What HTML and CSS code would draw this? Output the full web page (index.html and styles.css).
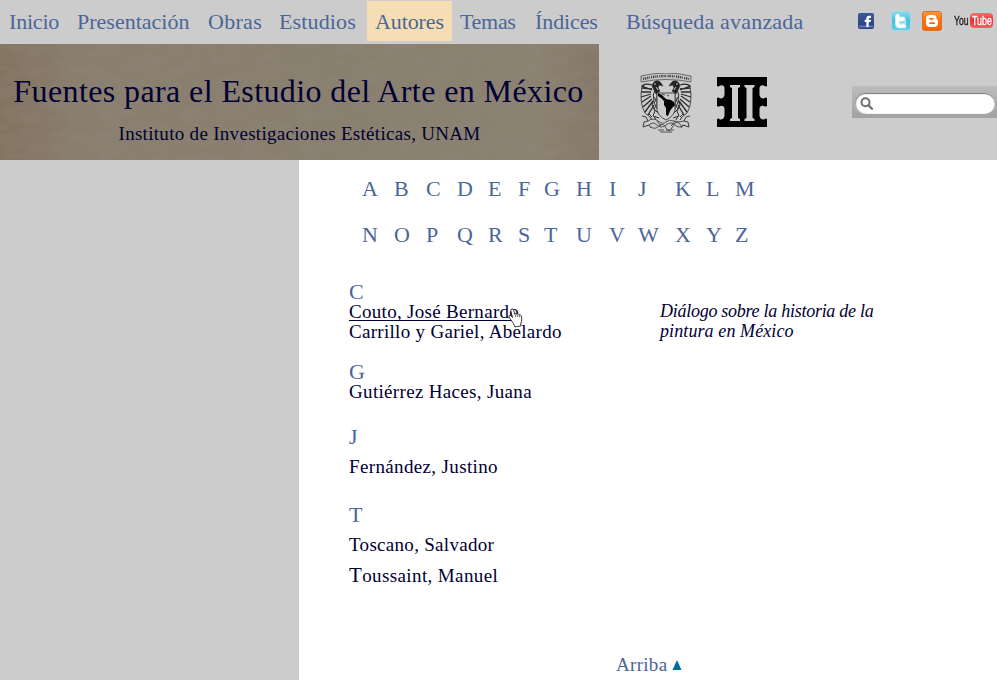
FILE: index.html
```html
<!DOCTYPE html>
<html lang="es">
<head>
<meta charset="utf-8">
<title>Fuentes para el Estudio del Arte en México</title>
<link rel="stylesheet" href="styles.css">
</head>
<body>
<header class="top">
  <nav class="nav">
    <a class="inicio">Inicio</a><a class="presentacion">Presentación</a><a class="obras">Obras</a><a class="estudios">Estudios</a><a class="autores">Autores</a><a class="temas">Temas</a><a class="indices">Índices</a><a class="busqueda">Búsqueda avanzada</a>
  </nav>
  <div class="social">
    <svg class="fb" width="16" height="16" viewBox="0 0 16 16"><defs><linearGradient id="f" x2="0" y2="1"><stop stop-color="#3b5998"/><stop offset="1" stop-color="#263f82"/></linearGradient></defs><rect width="16" height="16" rx="2" fill="url(#f)"/><path d="M1 12.500h14v2H1z" fill="#6079b0"/><path d="M8.400 14V9H6.700V6.800h1.700V5.400Q8.400 2.700 11 2.700h2V5h-1.200q-1.100 0-1.100 1.100v.7H13L12.600 9h-1.900v5z" fill="#fff"/></svg>
    <svg class="tw" width="20" height="20" viewBox="0 0 20 20"><defs><linearGradient id="w" x2="0" y2="1"><stop stop-color="#8bd9ee"/><stop offset=".5" stop-color="#48bddc"/><stop offset="1" stop-color="#67cce6"/></linearGradient></defs><rect x=".5" y=".5" width="19" height="19" rx="3" fill="url(#w)" stroke="#9bdced"/><path d="M6.500 5v7.500q0 2.500 2.700 2.500h3.600M6.500 8h5.500M7 11h5.800" fill="none" stroke="#c4eef8" stroke-width="5" stroke-linecap="round"/><path d="M6.500 5v7.500q0 2.500 2.700 2.500h3.600M6.500 8h5.500" fill="none" stroke="#fff" stroke-width="3.200" stroke-linecap="round"/><path d="M9 11.600h4.500" stroke="#7fd3e9" stroke-width="1.500" stroke-linecap="round"/></svg>
    <svg class="bl" width="20" height="20" viewBox="0 0 20 20"><defs><linearGradient id="b" x2="0" y2="1"><stop stop-color="#ff9a3c"/><stop offset=".5" stop-color="#ff6c05"/><stop offset="1" stop-color="#f76700"/></linearGradient></defs><rect x=".5" y=".5" width="19" height="19" rx="2.500" fill="url(#b)" stroke="#d9702a"/><path d="M8 4h3.200q3.300 0 3.300 3.200 0 1.300 1 1.500.5.200.5 1V12q0 4-4 4H8q-4 0-4-4V8q0-4 4-4z" fill="#fff"/><path d="M8 7.800h3M8 12.200h4.300" stroke="#fa6b08" stroke-width="1.700" stroke-linecap="round"/></svg>
    <div class="youtube"><span class="you"><span class="narrow">You</span></span><span class="tube"><span class="narrow">Tube</span></span></div>
  </div>
</header>
<section class="masthead">
  <div class="banner">
    <svg class="paper" width="599" height="116"><filter id="clouds" x="0" y="0" width="100%" height="100%"><feTurbulence type="fractalNoise" baseFrequency=".05 .09" numOctaves="5" seed="8"/><feColorMatrix values="0 0 0 0 .28  0 0 0 0 .24  0 0 0 0 .19  .9 0 0 0 -.34"/></filter><rect width="599" height="116" filter="url(#clouds)"/></svg>
    <h1>Fuentes para el Estudio del Arte en México</h1>
    <p>Instituto de Investigaciones Estéticas, UNAM</p>
  </div>
  <svg class="crest" width="52" height="60" viewBox="0 0 52 60" fill="none" stroke="#2c2c2c">
    <path d="M1 3Q26-3 51 3v6Q26 4 1 9z" fill="#c4c4c4" stroke-width=".6"/>
    <path d="M3 6Q26 0 49 6" stroke="#444" stroke-width="2.400" stroke-dasharray="1 .8 1.500 .9 1 .7 1 1.400"/>
    <g id="eagle">
      <path d="M14 9q4-3 7 1l2 3-4-1-1 3 2 3-4 3-3-6q-2-3 1-6z" fill="#222" stroke-width=".6"/>
      <path d="M14 11h2M16 14l2 3" stroke="#ccc"/>
      <path d="M12 12Q5 10 2 13l10 4M12 16L2 15M11 19L1 19M11 21L1 24M11 23L2 29M12 26L3 34M13 28L5 39M14 32L8 42" stroke-width="1.300"/>
      <path d="M2 13Q-1 30 5 40l5 4" stroke-width=".8"/>
      <path d="M15 17q-3 5-1 10l-2 5 3 6-2 5 6 2M17 20v16M14 24l2 3-2 3 2 3-2 3 5 5"/>
      <path d="M12 44l-3-3M14 43l2 4M10 44l2 3"/>
    </g>
    <use href="#eagle" transform="matrix(-1 0 0 1 52 0)"/>
    <path d="M17 20h18v17q-1 6-9 10-8-4-9-10z" fill="#ccc" stroke-width=".8"/>
    <path d="M18 20l4 2 3 3 1 1 5 1 3 2 1 3-3 3-2 3-2 5-2-1v-7l-2-3v-4l-3-3-3-2z" fill="#050505" stroke="none"/>
    <path d="M22 21l3 1M27 22l2 1" stroke-width=".8"/>
    <path d="M2 43l4 1 2 4-4 1-1 5 6-2 2 3M50 43l-4 1-2 4 4 1 1 5-6-2-2 3" stroke-width=".9"/>
    <path d="M8 48q5-4 10 0t8 1 8-1 10 0M9 52q4-4 8 0t9 0 9 0 9 0M11 54q4 3 8-1t7 2 7-2 9 1M17 48l4 5M35 48l-4 5M18 57h6m2 0h8M20 59h12" stroke="#444" stroke-width=".9"/>
  </svg>
  <svg class="iie" width="50" height="50" viewBox="0 0 50 50"><path d="M0 0h50v50H0z"/><path d="M13 8h10v2l-2 1v30l2 1v2H13v-2l2-1V11l-2-1zM27.500 8h10v2l-2 1v30l2 1v2h-10v-2l2-1V11l-2-1zM0 9q1.500 1 3-.5 3.500-1 4.500 2V18q-1 4-4.500 3.500Q1.500 20 0 21zM0 29q1.500 1 3 0 3.500-1 4.500 2V39q-1 4-4.500 3.500Q1.500 41 0 42zM50 9q-1.500 1-3-.5-3.500-1-4.500 2V18q1 4 4.500 3.500Q48.500 20 50 21zM50 29q-1.500 1-3 0-3.500-1-4.500 2V39q1 4 4.500 3.500Q48.500 41 50 42z" fill="#ccc"/></svg>
  <div class="search"><div class="field"><svg width="14" height="14" viewBox="0 0 14 14"><circle cx="5.500" cy="5.300" r="4" fill="none" stroke="#707070" stroke-width="2"/><path d="M8.500 8.300l3.500 3.500" stroke="#707070" stroke-width="2.300" stroke-linecap="round"/></svg></div></div>
</section>
<div class="page">
  <aside></aside>
  <main>
    <div class="alphabet">
      <a>A</a><a>B</a><a>C</a><a>D</a><a>E</a><a>F</a><a>G</a><a>H</a><a>I</a><a>J</a><a>K</a><a>L</a><a>M</a>
      <a>N</a><a>O</a><a>P</a><a>Q</a><a>R</a><a>S</a><a>T</a><a>U</a><a>V</a><a>W</a><a>X</a><a>Y</a><a>Z</a>
    </div>
    <div class="listing">
      <div class="authors">
        <section class="group-c"><h2>C</h2><a class="hover">Couto, José Bernardo</a><a>Carrillo y Gariel, Abelardo</a></section>
        <section class="group-g"><h2>G</h2><a class="gutierrez">Gutiérrez Haces, Juana</a></section>
        <section class="group-j"><h2>J</h2><a class="fernandez">Fernández, Justino</a></section>
        <section class="group-t"><h2>T</h2><a>Toscano, Salvador</a><a class="toussaint"><span class="initial">T</span>oussaint, Manuel</a></section>
      </div>
      <div class="work"><span class="line-one">Diálogo sobre la historia de la</span><span class="line-two">pintura en México</span></div>
    </div>
    <a class="up">Arriba <svg width="10" height="10" viewBox="0 0 10 10"><path d="M5 0l4.500 10h-9z" fill="#006e99"/></svg></a>
  </main>
</div>
<svg class="cursor" width="15" height="20" viewBox="0 0 15 20"><path d="M5.500 15.500L1.500 10Q0 7.500 2 7.200q1.200.2 2.500 2.300L2.800 2.600Q2.800.8 4.300.9q1 .2 1.400 1.500l1 3.600Q7.600 4.800 8.800 6q1.500-1 2.300.8 1.500-.6 2.200 1 .8 2.600.2 5.500l-.8 2.700.2 2-6 .9z" fill="#fff" stroke="#222" stroke-width=".9"/><path d="M7 6l.8 3M9 6.500l.6 2.500M11.200 7l.4 2.200" stroke="#333" stroke-width=".7"/></svg>
</body>
</html>
```

FILE: styles.css
```css
* { box-sizing: border-box; }
body {
  margin: 0;
  width: 997px;
  height: 680px;
  overflow: hidden;
  position: relative;
  background: #ccc;
  color: #000033;
  font: 19px/20px Palatino, "Liberation Serif", serif;
}
h1, h2, p { margin: 0; font-weight: normal; }
svg { display: block; flex: none; }
.top { display: flex; height: 44px; }
.nav {
  display: flex;
  flex: none;
  width: 858px;
  padding: 1px 0 3px 9px;
  color: #4b6698;
  font-size: 22px;
  line-height: 42px;
  white-space: nowrap;
}
.nav a { flex: none; height: 40px; }
.inicio { width: 68px; letter-spacing: -.2px; }
.presentacion { width: 131px; }
.obras { width: 71px; letter-spacing: .3px; }
.estudios { width: 88px; letter-spacing: .15px; }
.autores { width: 85px; padding-left: 8px; background: #f5deb3; letter-spacing: -.1px; }
.temas { width: 83px; padding-left: 8px; letter-spacing: -.3px; }
.indices { width: 91px; letter-spacing: -.1px; }
.busqueda { letter-spacing: .2px; }
.social { display: flex; padding-top: 11px; flex: none; }
.fb { margin: 2px 17px 0 0; }
.tw { margin-right: 11px; }
.bl { margin-right: 12px; }
.youtube { display: flex; margin-top: 2px; height: 15px; font: 13px/15px "Liberation Sans", sans-serif; }
.narrow { display: inline-block; transform-origin: left; }
.you { width: 16px; color: #222; }
.you .narrow { transform: scaleX(.66); -webkit-text-stroke: .4px #222; }
.tube { width: 23px; padding-left: 2px; border-radius: 4px; background: linear-gradient(#ff6a6a, #ee2f35 50%, #ff5a5a); color: #fff; }
.tube .narrow { transform: scaleX(.68); -webkit-text-stroke: .4px #fff; }
.masthead { display: flex; height: 116px; }
.banner {
  position: relative;
  flex: none;
  width: 599px;
  padding-top: 29px;
  text-align: center;
  background: linear-gradient(90deg, #837360, #8a7f6f 15%, #897f6f 55%, #8c8272 90%, #857868);
}
.paper { position: absolute; inset: 0; }
.banner h1, .banner p { position: relative; white-space: nowrap; }
.banner h1 { margin-left: -2px; font-size: 32px; line-height: 36px; letter-spacing: .4px; }
.banner p { margin-top: 15px; letter-spacing: .3px; }
.crest { margin: 29px 24px 0 41px; }
.iie { margin: 33px 0 0 1px; }
.search {
  flex: none;
  width: 145px;
  height: 32px;
  margin: 42px 0 0 85px;
  padding: 7px 2px 4px 3px;
  background: linear-gradient(#bcbcbc, #a2a2a2);
}
.field {
  height: 21px;
  padding: 4px 5px;
  border-radius: 11px;
  background: #fff;
  box-shadow: inset 0 1px 1px #777, inset 1px 0 1px #aaa;
}
.page { display: flex; height: 520px; }
aside { flex: none; width: 299px; }
main { width: 698px; padding-top: 17px; background: #fff; }
.alphabet {
  display: grid;
  grid-template-columns: 32px 32px 31px 31px 30px 26px 32px 33px 29px 37px 31px 29px 24px;
  grid-template-rows: 46px 46px;
  height: 105px;
  padding-left: 63px;
  color: #4b6698;
  font-size: 22px;
  line-height: 24px;
}
.listing { display: flex; height: 371px; padding-left: 50px; }
.authors { width: 311px; letter-spacing: .3px; }
.authors a { display: block; width: max-content; height: 20px; }
h2 { color: #4b6698; font-size: 22px; line-height: 20px; }
.authors .hover { border-bottom: 1px solid #000033; height: 19px; margin-bottom: 1px; }
.group-c { height: 80px; }
.group-g { height: 65px; }
.group-j { height: 78px; }
.group-j h2, .group-t h2 { margin-bottom: 10px; }
.gutierrez { letter-spacing: .33px; }
.fernandez { letter-spacing: .36px; }
.authors .toussaint { margin-top: 10px; letter-spacing: .38px; }
.initial { font-size: 21px; }
.work { padding-top: 19px; font-size: 18px; font-style: italic; white-space: nowrap; }
.work span { display: block; }
.line-one { letter-spacing: -.27px; }
.line-two { letter-spacing: .1px; }
.up { display: flex; align-items: center; gap: 5px; margin-left: 317px; padding-top: 2px; color: #4b6698; letter-spacing: .3px; }
.cursor { position: absolute; left: 508px; top: 308px; }
```
